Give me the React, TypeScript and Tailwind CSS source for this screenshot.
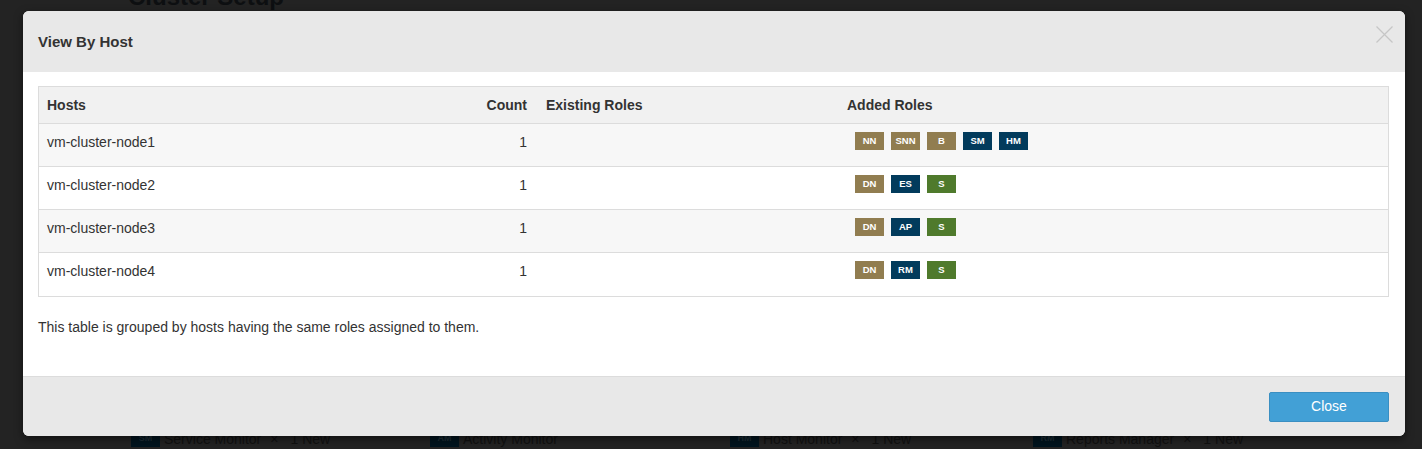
import React from "react";

type Role = { label: string; kind: "hdfs" | "mgmt" | "solr" };

const rows: { host: string; count: number; roles: Role[] }[] = [
  {
    host: "vm-cluster-node1",
    count: 1,
    roles: [
      { label: "NN", kind: "hdfs" },
      { label: "SNN", kind: "hdfs" },
      { label: "B", kind: "hdfs" },
      { label: "SM", kind: "mgmt" },
      { label: "HM", kind: "mgmt" },
    ],
  },
  {
    host: "vm-cluster-node2",
    count: 1,
    roles: [
      { label: "DN", kind: "hdfs" },
      { label: "ES", kind: "mgmt" },
      { label: "S", kind: "solr" },
    ],
  },
  {
    host: "vm-cluster-node3",
    count: 1,
    roles: [
      { label: "DN", kind: "hdfs" },
      { label: "AP", kind: "mgmt" },
      { label: "S", kind: "solr" },
    ],
  },
  {
    host: "vm-cluster-node4",
    count: 1,
    roles: [
      { label: "DN", kind: "hdfs" },
      { label: "RM", kind: "mgmt" },
      { label: "S", kind: "solr" },
    ],
  },
];

const roleColor = {
  hdfs: "bg-[#917d50]",
  mgmt: "bg-[#023b5c]",
  solr: "bg-[#4f7a2c]",
};

const behind = [
  { badge: "SM", name: "Service Monitor", isNew: true },
  { badge: "AM", name: "Activity Monitor", isNew: false },
  { badge: "HM", name: "Host Monitor", isNew: true },
  { badge: "RM", name: "Reports Manager", isNew: true },
];

const App = () => {
  return (
    <div className="relative h-[449px] w-full overflow-hidden bg-[#232323] font-['Liberation_Sans',Arial,sans-serif]">
      {/* page behind the backdrop */}
      <div className="flex h-full flex-col pl-[128px]">
        <h1 className="-mt-[15px] text-[24px] font-bold leading-[24px] text-[#0d0f11]">
          Cluster Setup
        </h1>
        <div className="mt-auto grid grid-cols-[299px_300px_303px_300px] pb-[2px] pl-[3px]">
          {behind.map((b) => (
            <div key={b.badge} className="flex h-[16px] items-center text-[14px] text-[#111]">
              <span className="flex h-[15px] w-[29px] items-center justify-center bg-[#00141e] text-[9px] font-bold text-[#1f2e37]">
                {b.badge}
              </span>
              <span className="ml-[4px]">{b.name}</span>
              {b.isNew && (
                <>
                  <span className="ml-[9px]">×</span>
                  <span className="ml-[12px]">1 New</span>
                </>
              )}
            </div>
          ))}
        </div>
      </div>

      {/* modal */}
      <div className="absolute inset-0 pl-[23px] pt-[11px]">
        <div className="flex h-[425px] w-[1382px] flex-col overflow-hidden rounded-[6px] bg-white shadow-[0_3px_9px_rgba(0,0,0,0.5)]">
          <div className="flex h-[61px] shrink-0 justify-between bg-[#e8e8e8] pl-[15px] pr-[12px]">
            <div className="flex items-center pt-[2px] text-[15px] font-bold text-[#333]">View By Host</div>
            <button className="mt-[15px] h-[17px] w-[17px]">
              <svg viewBox="0 0 17 17" className="h-[17px] w-[17px]">
                <path d="M0.5 0.5 L16.5 16.5 M16.5 0.5 L0.5 16.5" stroke="#c6c6c6" strokeWidth="1.2" fill="none" />
              </svg>
            </button>
          </div>

          <div className="flex-1 px-[15px] pt-[14px] text-[14px] text-[#333]">
            <div className="w-[1351px] border border-[#dcdcdc]">
              <div className="grid h-[37px] grid-cols-[441px_57px_301px_1fr] items-center border-b border-[#dcdcdc] bg-[#f1f1f1] font-bold">
                <div className="pl-[8px]">Hosts</div>
                <div className="pr-[10px] text-right">Count</div>
                <div className="pl-[9px]">Existing Roles</div>
                <div className="pl-[9px]">Added Roles</div>
              </div>
              {rows.map((r, i) => (
                <div
                  key={r.host}
                  className={`grid h-[43px] grid-cols-[441px_57px_301px_1fr] pt-[8px] leading-[20px] ${
                    i < rows.length - 1 ? "border-b border-[#dcdcdc]" : "h-[42px]"
                  } ${i % 2 === 0 ? "bg-[#f7f7f7]" : "bg-white"}`}
                >
                  <div className="pl-[8px]">{r.host}</div>
                  <div className="pr-[10px] text-right">{r.count}</div>
                  <div className="pl-[9px]"></div>
                  <div className="flex gap-[7px] pl-[17px]">
                    {r.roles.map((role, j) => (
                      <span
                        key={j}
                        className={`flex h-[18px] w-[29px] items-center justify-center text-[9.5px] font-bold text-white ${roleColor[role.kind]}`}
                      >
                        {role.label}
                      </span>
                    ))}
                  </div>
                </div>
              ))}
            </div>
            <p className="mt-[20px] leading-[20px]">
              This table is grouped by hosts having the same roles assigned to them.
            </p>
          </div>

          <div className="flex h-[60px] shrink-0 items-center justify-end border-t border-[#dcdcdc] bg-[#e8e8e8] pr-[16px]">
            <button className="h-[30px] w-[120px] rounded-[2px] border border-[#3a8fc2] bg-[#42a0d6] text-[14px] text-white">
              Close
            </button>
          </div>
        </div>
      </div>
    </div>
  );
};

export default App;
